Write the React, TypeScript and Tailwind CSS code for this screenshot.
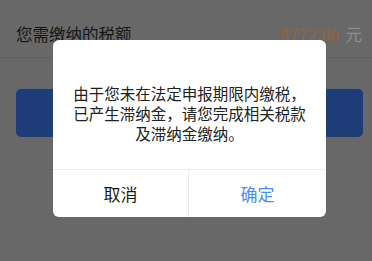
import React from "react";

export default function App() {
  const font = { fontFamily: '"Noto Sans CJK SC", "Noto Sans", sans-serif' };
  return (
    <div className="relative w-[372px] h-[261px] overflow-hidden bg-[#686868]" style={font}>
      <div className="flex items-center justify-between h-[58px] pt-[12px] pl-4 pr-[10px] border-b border-[#616161]">
        <span className="text-[16.5px] text-[#161616] leading-none">您需缴纳的税额</span>
        <span className="text-[16.5px] leading-none">
          <span className="text-[#9a6238]">8772.08</span>
          <span className="text-[#8e8e8e] ml-[6px]">元</span>
        </span>
      </div>
      <div className="ml-4 mr-[9px] mt-[31px] h-[48px] rounded-[5px] bg-[#1d3c78]" />
      <div className="absolute left-[53px] top-[40px] w-[273px] rounded-[6px] bg-white overflow-hidden flex flex-col">
        <div className="pt-[43px] pb-[26px] text-center text-[15.5px] leading-[20px] text-[#222]">
          <p>由于您未在法定申报期限内缴税，</p>
          <p>已产生滞纳金，请您完成相关税款</p>
          <p>及滞纳金缴纳。</p>
        </div>
        <div className="flex h-[48px] border-t border-[#ececec]">
          <div className="w-[136px] flex items-center justify-center text-[17px] text-[#1a1a1a] border-r border-[#ececec]">取消</div>
          <div className="flex-1 flex items-center justify-center text-[17px] text-[#4a8cf0]">确定</div>
        </div>
      </div>
    </div>
  );
}
